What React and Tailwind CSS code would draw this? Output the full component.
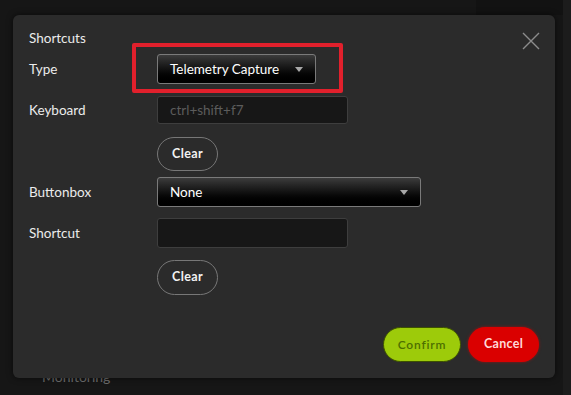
import React from "react";

const Caret = () => (
  <svg width="8" height="5" viewBox="0 0 8 5" className="shrink-0">
    <path d="M0 0 L8 0 L4 5 Z" fill="#a8a8a8" />
  </svg>
);

const Select = ({ value, width }) => (
  <div
    className={`flex items-center justify-between h-[30px] ${width} pl-3 pr-[12px] rounded-[3px] border border-[#7a7a7a] bg-gradient-to-b from-[#3c3c3c] via-[#121212] to-[#000000] text-white text-[13.5px]`}
  >
    <span>{value}</span>
    <Caret />
  </div>
);

const Input = ({ placeholder, height }) => (
  <div
    className={`flex items-center w-[191px] ${height} px-3 rounded-[3px] border border-[#3e3e3e] bg-[#171717] text-[#5c5c5c] text-[13.5px]`}
  >
    {placeholder}
  </div>
);

const ClearButton = ({ height }) => (
  <button
    className={`w-[61px] ${height} rounded-full border border-[#777777] text-[#f2f2f2] text-[12.5px] font-bold tracking-[0.4px]`}
  >
    Clear
  </button>
);

export default function App() {
  return (
    <div
      className="relative w-[571px] h-[395px] overflow-hidden bg-[#161616]"
      style={{ fontFamily: "Lato, 'Open Sans', sans-serif" }}
    >
      {/* page behind the dialog */}
      <div className="absolute left-[476px] top-0 w-[95px] h-[15px] bg-[#121212]" />
      <div className="absolute right-0 top-0 w-[8px] h-full bg-[#1c1c1c]" />
      <div className="absolute left-[42px] top-[366px] text-[14px] text-[#6e6e6e]">Monitoring</div>

      {/* dialog */}
      <div className="absolute left-[13px] top-[15px] w-[542px] h-[363px] rounded-[6px] bg-[#2b2b2b] shadow-[0_0_6px_rgba(0,0,0,0.6)] pt-[14px] pl-[16px] pr-[16px]">
        <button className="absolute right-[14px] top-[17px] w-[20px] h-[18px]">
          <svg width="20" height="18" viewBox="0 0 20 18">
            <path d="M2 1 L18 17 M18 1 L2 17" stroke="#8c8c8c" strokeWidth="1.4" fill="none" />
          </svg>
        </button>

        <div className="text-[13.5px] leading-[18px] text-[#ececec]">Shortcuts</div>

        <div className="grid grid-cols-[128px_1fr] items-center">
          <div className="mt-[7px] text-[13.5px] text-[#ececec]">Type</div>
          <div className="mt-[7px]">
            <Select value="Telemetry Capture" width="w-[159px]" />
          </div>

          <div className="mt-[12px] text-[13.5px] text-[#ececec]">Keyboard</div>
          <div className="mt-[12px]">
            <Input placeholder="ctrl+shift+f7" height="h-[28px]" />
          </div>

          <div className="mt-[13px]" />
          <div className="mt-[13px]">
            <ClearButton height="h-[34px]" />
          </div>

          <div className="mt-[6px] text-[13.5px] text-[#ececec]">Buttonbox</div>
          <div className="mt-[6px]">
            <Select value="None" width="w-[264px]" />
          </div>

          <div className="mt-[11px] text-[13.5px] text-[#ececec]">Shortcut</div>
          <div className="mt-[11px]">
            <Input placeholder="" height="h-[30px]" />
          </div>

          <div className="mt-[12px]" />
          <div className="mt-[12px]">
            <ClearButton height="h-[35px]" />
          </div>
        </div>

        <div className="flex justify-end gap-[7px] mt-[32px]">
          <button className="w-[78px] h-[35px] rounded-full bg-[#9dcb0a] border border-[#3d5200] text-[#4d6f00] text-[12px] font-semibold tracking-[0.8px]">
            Confirm
          </button>
          <button className="w-[71px] h-[35px] rounded-full bg-[#da0000] text-[#ffd9d9] text-[12.5px] font-bold tracking-[0.3px] shadow-[0_0_3px_rgba(230,0,0,0.6)]">
            Cancel
          </button>
        </div>

        {/* annotation box */}
        <div className="absolute left-[119px] top-[28px] w-[211px] h-[50px] border-[4px] border-[#e1202c] rounded-[2px]" />
      </div>
    </div>
  );
}
